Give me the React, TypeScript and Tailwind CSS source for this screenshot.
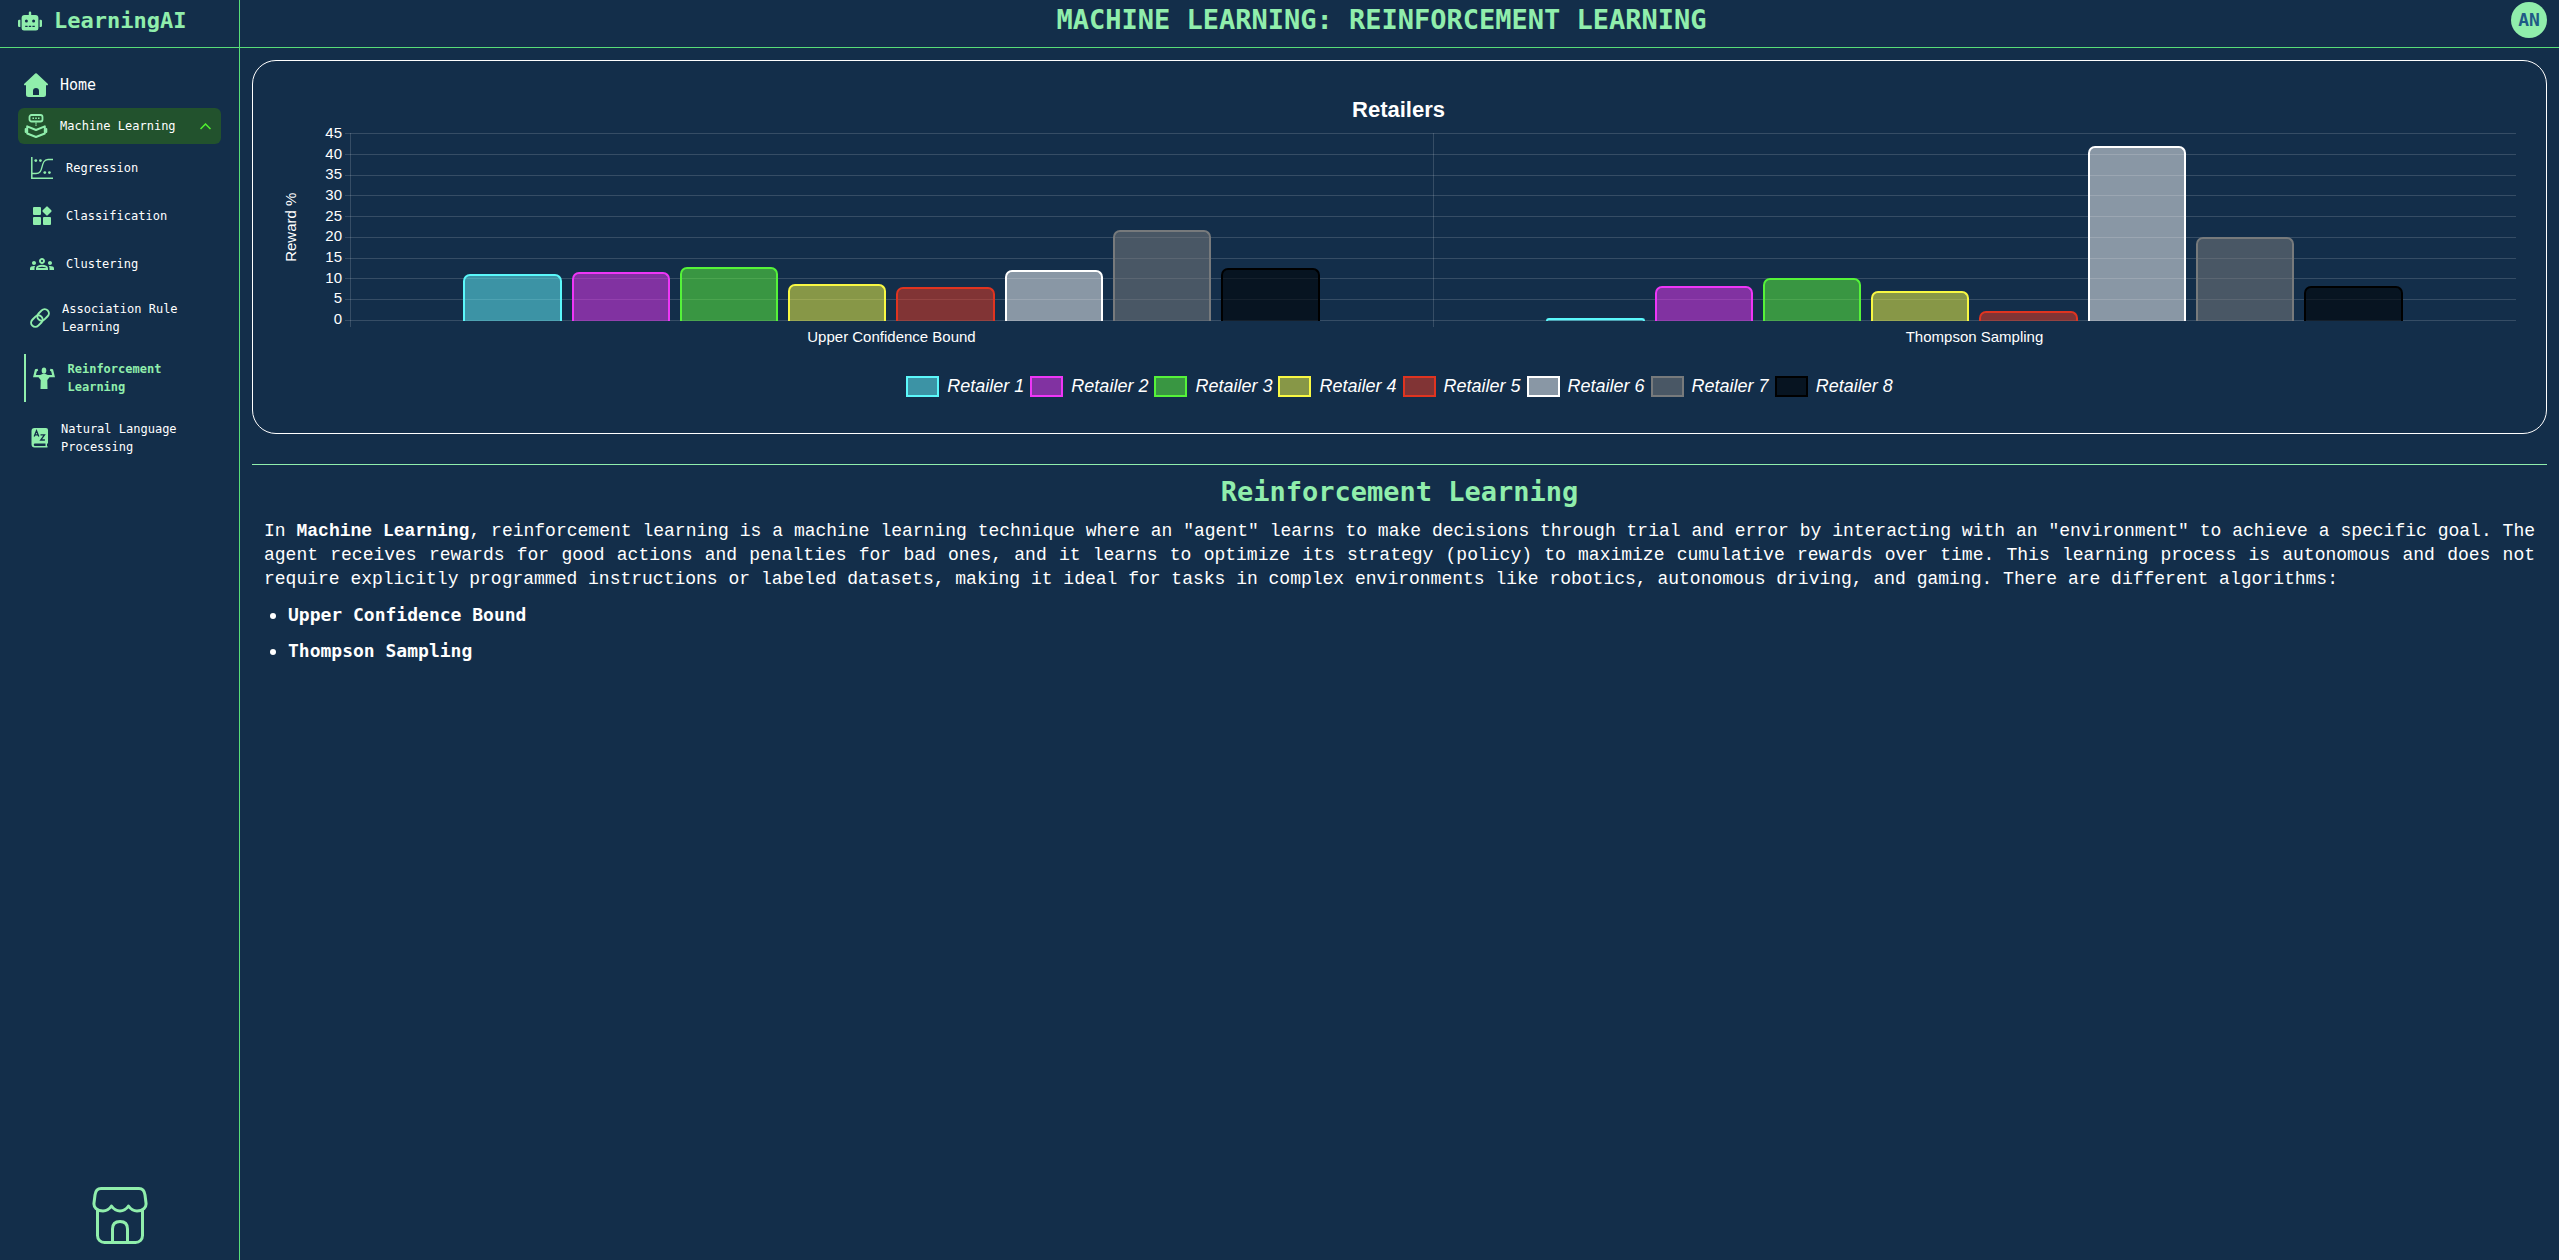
import type { ReactNode } from "react";
import { FaRobot } from "react-icons/fa";
import { MdOutlineGroups } from "react-icons/md";
import { BiSolidWidget } from "react-icons/bi";

const HomeIcon = () => (
  <svg viewBox="0 0 24 24" className="size-6" fill="currentColor" aria-hidden="true">
    <path
      fillRule="evenodd"
      d="M11.2.5a1.2 1.2 0 0 1 1.6 0l10.9 10.2c.6.6.2 1.6-.6 1.6H22v9.2a2.5 2.5 0 0 1-2.5 2.5h-15A2.5 2.5 0 0 1 2 21.500v-9.200H.9c-.8 0-1.200-1-.6-1.600zM9 22h6v-4a3 3 0 0 0-6 0z"
    />
  </svg>
);

const ReadingRobotIcon = () => (
  <svg viewBox="0 0 24 24" className="size-6" fill="none" stroke="currentColor" aria-hidden="true">
    <rect x="5.500" y="1" width="13" height="6.500" rx="2" strokeWidth="1.800" />
    <path d="M8.500 4.200h1.500M11.200 4.200h1.600M14 4.200h1.500" strokeWidth="1.500" />
    <path d="M12 8.400v3.400" strokeWidth="1.400" strokeDasharray="1.400 .7" />
    <path d="M3.200 12.300 12 16l8.800-3.700v7.200L12 23l-8.800-3.500z" strokeWidth="2" strokeLinejoin="round" />
    <path d="M1.800 15v3M22.200 15v3" strokeWidth="2.200" strokeLinecap="round" />
  </svg>
);

const RegressionIcon = () => (
  <svg viewBox="0 0 22 22" className="size-[22px]" fill="none" stroke="currentColor" aria-hidden="true">
    <path d="M.8 0v21.200H22" strokeWidth="1.500" />
    <path d="M1 16.500h4c4 0 5-2.500 6-6.500s2-7.500 6-7.500h5" strokeWidth="1.300" />
    <g fill="currentColor" stroke="none">
      <circle cx="4.800" cy="3.600" r="1.400" />
      <circle cx="9.400" cy="3.600" r="1.400" />
      <circle cx="13.800" cy="15.600" r="1.400" />
      <circle cx="18.400" cy="15.600" r="1.400" />
    </g>
  </svg>
);

const ChainIcon = () => (
  <svg viewBox="0 0 20 20" className="size-5" fill="none" stroke="currentColor" strokeWidth="2" aria-hidden="true">
    <g transform="rotate(-45 10 10)">
      <rect x="-.8" y="5.800" width="12.800" height="8.400" rx="4.200" />
      <rect x="8" y="5.800" width="12.800" height="8.400" rx="4.200" />
    </g>
  </svg>
);

const StrongIcon = () => (
  <svg viewBox="0 0 22 22" className="size-[22px]" fill="currentColor" aria-hidden="true">
    <ellipse cx="11" cy="3.600" rx="2.300" ry="3.200" />
    <path d="M2 2.200 4.500 1.800 5.200 3.500 3.800 4.500 2.900 8h4.200L9.500 7h3l2.400 1h4.200l-.9-3.500-1.400-1 .7-1.700 2.500.4L22 10.300H16.500L14.300 13l.2 9h-7l.2-9-2.200-2.700H0z" />
  </svg>
);

const DictionaryIcon = () => (
  <svg viewBox="0 0 18 20" className="h-5 w-[18px]" aria-hidden="true">
    <path
      fill="currentColor"
      fillRule="evenodd"
      d="M3.500 0H15a2 2 0 0 1 2 2v13.500h-1V18h.5v1.500h-13A3.200 3.200 0 0 1 .5 16.500V3a3 3 0 0 1 3-3zM4 15.500a1.250 1.250 0 0 0 0 2.500h10.500v-2.500z"
    />
    <path d="M3.200 8.400 5.500 2.800l2.300 5.600M4.200 6.900h2.700M9.500 6.800h4l-3.800 5.200h4.200" fill="none" stroke="#132e4a" strokeWidth="1.300" />
  </svg>
);

const StoreIcon = () => (
  <svg viewBox="0 0 56 58" className="h-[58px] w-14" fill="none" stroke="currentColor" strokeWidth="3" strokeLinejoin="round" aria-hidden="true">
    <path d="M9 2.500h38c4 0 5.500 2.500 6 6.500l1 8c.6 4.500-3 8-9 8-4 0-6-1.500-8.500-5-2.500 3.500-5 5-8.500 5s-6-1.500-8.500-5c-2.500 3.500-4.500 5-8.500 5-6 0-9.600-3.500-9-8l1-8c.5-4 2-6.500 6-6.500z" />
    <path d="M5.500 24v25.500c0 4 3 7 7 7h31c4 0 7-3 7-7V24" />
    <path d="M20.500 56V43c0-5 3-7.500 7.500-7.500s7.500 2.500 7.500 7.500v13" />
  </svg>
);

type Item = { label: string; icon: ReactNode; row: string; gap: string; active?: boolean };

const items: Item[] = [
  { label: "Regression", icon: <RegressionIcon />, row: "h-12 pl-[31px]", gap: "ml-[13px]" },
  { label: "Classification", icon: <BiSolidWidget size={24} />, row: "h-12 pl-[30px]", gap: "ml-3" },
  { label: "Clustering", icon: <MdOutlineGroups size={24} />, row: "h-12 pl-[30px]", gap: "ml-3" },
  { label: "Association Rule Learning", icon: <ChainIcon />, row: "h-[60px] pl-[30px]", gap: "ml-3" },
  { label: "Reinforcement Learning", icon: <StrongIcon />, row: "h-[60px] pl-6", gap: "ml-3", active: true },
  { label: "Natural Language Processing", icon: <DictionaryIcon />, row: "h-[60px] pl-[31px]", gap: "ml-3" },
];

const series = [
  { name: "Retailer 1", style: "border-[#5bf8fb] bg-[#66f8ff]/50", values: [11.3, 0.7] },
  { name: "Retailer 2", style: "border-[#ee36f7] bg-[#f036f7]/50", values: [11.7, 8.5] },
  { name: "Retailer 3", style: "border-[#55f339] bg-[#60fe39]/50", values: [13, 10.4] },
  { name: "Retailer 4", style: "border-[#f8f843] bg-[#fcff43]/50", values: [8.9, 7.2] },
  { name: "Retailer 5", style: "border-[#e03420] bg-[#f03a20]/50", values: [8.1, 2.5] },
  { name: "Retailer 6", style: "border-white bg-white/50", values: [12.1, 41.9] },
  { name: "Retailer 7", style: "border-[#777a7c] bg-[#808080]/50", values: [21.7, 20] },
  { name: "Retailer 8", style: "border-black bg-[#000306]/60", values: [12.8, 8.5] },
];
const algorithms = ["Upper Confidence Bound", "Thompson Sampling"];
const ticks = [45, 40, 35, 30, 25, 20, 15, 10, 5, 0];

function Chart() {
  return (
    <section className="rounded-3xl border border-white pt-[34px] pr-[30px] pb-[34px] pl-7 font-['Liberation_Sans',sans-serif] text-white">
      <h2 className="text-center text-[22px] leading-[30px] font-bold">Retailers</h2>
      <div className="mt-2 flex">
        <div className="flex h-[188px] w-[22px] items-center justify-center">
          <span className="-rotate-90 text-[15px] whitespace-nowrap">Reward %</span>
        </div>
        <div className="flex h-[188px] w-[41px] flex-col justify-between text-right text-[15px] leading-5">
          {ticks.map((t) => (
            <div key={t} className="flex h-px items-center justify-end pr-0.5 pb-0.5">
              {t}
            </div>
          ))}
        </div>
        <div className="flex-1 pl-1.5">
          <div className="relative h-[188px]">
            <div className="absolute inset-y-0 right-0 -left-[5px] flex flex-col justify-between">
              {ticks.map((t) => (
                <div key={t} className="h-px bg-white/15" />
              ))}
            </div>
            <div className="relative grid h-full grid-cols-2">
              {algorithms.map((a, c) => (
                <div key={a} className="relative flex items-end px-[10%]">
                  <div className="absolute top-0 -bottom-1.5 left-0 w-px bg-white/15" />
                  {series.map((s) => (
                    <div key={s.name} className="flex h-full flex-1 items-end px-[5px]">
                      <div
                        className={`w-full rounded-t-[7px] border-2 border-b-0 ${s.style}`}
                        style={{ height: `${(s.values[c] / 45) * 100}%` }}
                      />
                    </div>
                  ))}
                </div>
              ))}
            </div>
          </div>
          <div className="mt-[6px] grid grid-cols-2 text-center text-[15px] leading-5">
            {algorithms.map((a) => (
              <span key={a}>{a}</span>
            ))}
          </div>
        </div>
      </div>
      <ul className="mt-[26px] flex flex-wrap justify-center gap-1.5 pl-0.5 text-lg leading-[26px] italic">
        {series.map((s) => (
          <li key={s.name} className="flex items-center gap-2">
            <span className={`h-[21px] w-[33px] border-2 ${s.style}`} />
            {s.name}
          </li>
        ))}
      </ul>
    </section>
  );
}

export default function App() {
  return (
    <div className="flex min-h-screen bg-[#132e4a] font-['DejaVu_Sans_Mono',monospace] text-white">
      <aside className="flex w-60 shrink-0 flex-col border-r border-[#58dd78]">
        <a href="#" className="flex h-12 items-center gap-3 border-b border-[#58dd78] pb-1.5 pl-[18px] text-[#90eeac]">
          <FaRobot size={24} />
          <span className="text-[22px] font-bold">LearningAI</span>
        </a>
        <nav className="flex flex-col pt-3.5">
          <a href="#" className="flex h-[46px] items-center gap-3 pl-6">
            <span className="text-[#90eeac]">
              <HomeIcon />
            </span>
            <span className="text-[15px]">Home</span>
          </a>
          <button type="button" className="mr-[18px] ml-[18px] flex h-9 items-center rounded-md bg-[#22522d] pr-2.5 pl-1.5 text-left">
            <span className="text-[#90eeac]">
              <ReadingRobotIcon />
            </span>
            <span className="ml-3 flex-1 text-xs">Machine Learning</span>
            <svg viewBox="0 0 11 7" className="h-[7px] w-[11px]" fill="none" stroke="#50f030" strokeWidth="1.5" aria-hidden="true">
              <path d="M.5 6 5.500 1l5 5" />
            </svg>
          </button>
          {items.map((it) => (
            <a
              key={it.label}
              href="#"
              aria-current={it.active ? "page" : undefined}
              className={`flex items-center pr-10 text-xs leading-[18px] ${it.row} ${it.active ? "font-bold text-[#90eeac]" : ""}`}
            >
              {it.active && <span className="mr-[7px] h-12 w-[3px] bg-[#90eeac]" />}
              <span className="shrink-0 text-[#90eeac]">{it.icon}</span>
              <span className={it.gap}>{it.label}</span>
            </a>
          ))}
        </nav>
        <button type="button" aria-label="Store" className="mx-auto mt-auto mb-4 text-[#90eeac]">
          <StoreIcon />
        </button>
      </aside>
      <div className="flex min-w-0 flex-1 flex-col">
        <header className="flex h-12 items-center border-b border-[#58dd78] px-3 pb-[7px]">
          <h1 className="flex-1 text-center text-[27px] leading-9 font-bold text-[#90eeac]">MACHINE LEARNING: REINFORCEMENT LEARNING</h1>
          <button type="button" className="size-9 rounded-full bg-[#90eeac] text-lg font-bold text-[#1f5a86]">
            AN
          </button>
        </header>
        <main className="p-3">
          <Chart />
          <hr className="mt-[30px] border-[#90eeac]" />
          <section className="px-3 text-lg leading-6">
            <h2 className="mt-[7px] text-center text-[27px] leading-10 font-bold text-[#90eeac]">Reinforcement Learning</h2>
            <p className="mt-[7px] text-justify font-['Liberation_Mono',monospace]">
              In <strong>Machine Learning</strong>, reinforcement learning is a machine learning technique where an "agent" learns to make
              decisions through trial and error by interacting with an "environment" to achieve a specific goal. The agent receives rewards
              for good actions and penalties for bad ones, and it learns to optimize its strategy (policy) to maximize cumulative rewards
              over time. This learning process is autonomous and does not require explicitly programmed instructions or labeled datasets,
              making it ideal for tasks in complex environments like robotics, autonomous driving, and gaming. There are different
              algorithms:
            </p>
            <ul className="mt-3 flex list-disc flex-col gap-3 pl-6 font-bold">
              {algorithms.map((a) => (
                <li key={a}>{a}</li>
              ))}
            </ul>
          </section>
        </main>
      </div>
    </div>
  );
}
